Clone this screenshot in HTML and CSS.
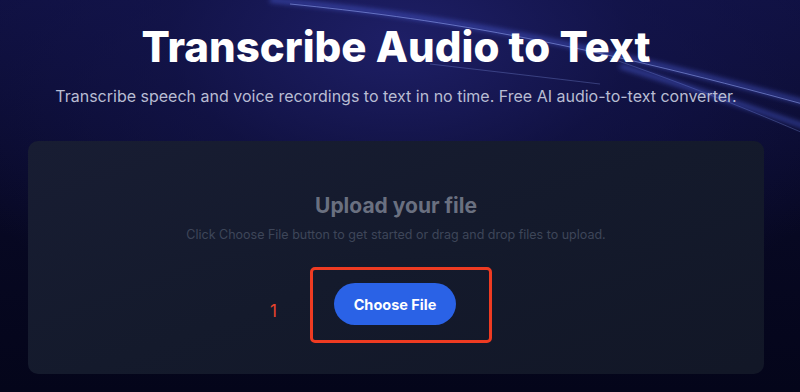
FILE: index.html
```html
<!DOCTYPE html>
<html lang="en">
<head>
    <meta charset="UTF-8" />
    <meta name="viewport" content="width=device-width, initial-scale=1" />
    <title>Transcribe Audio to Text</title>
    <link rel="stylesheet" href="styles.css">
</head>
<body>

    <div class="page">
        <svg class="streaks" viewBox="0 0 800 392" preserveAspectRatio="none" aria-hidden="true">
            <defs>
                <filter id="glow" x="-10%" y="-50%" width="120%" height="200%">
                    <feGaussianBlur stdDeviation="2.5" />
                </filter>
            </defs>
            <path d="M270 0 C 420 14, 560 36, 810 104" class="streak wide" filter="url(#glow)" />
            <path d="M290 4 C 430 18, 570 40, 810 106" class="streak thin" />
            <path d="M430 64 C 490 71, 550 78, 600 84" class="streak faint" />
            <path d="M610 58 C 690 86, 750 110, 810 136" class="streak faint" />
            <path d="M620 66 C 700 90, 750 108, 810 128" class="streak wide" filter="url(#glow)" />
        </svg>

        <div class="hero">
            <h1>Transcribe Audio to Text</h1>
            <p class="lead">Transcribe speech and voice recordings to text in no time. Free AI audio-to-text converter.</p>
        </div>

        <div class="upload-card">
            <h2>Upload your file</h2>
            <p class="hint">Click Choose File button to get started or drag and drop files to upload.</p>
            <div class="step">
                <span class="step-num">1</span>
                <div class="step-box">
                    <button class="choose-btn">Choose File</button>
                </div>
            </div>
        </div>
    </div>

</body>
</html>
```

FILE: styles.css
```css
body {
    margin: 0;
    padding: 0;
    font-family: 'Inter', 'Liberation Sans', sans-serif;
    background-color: #05061a;
}

.page {
    position: relative;
    width: 800px;
    height: 392px;
    overflow: hidden;
    background:
        radial-gradient(ellipse 520px 300px at 400px 40px, #1e1f66 0%, #15165096 45%, rgba(5, 6, 26, 0) 100%),
        linear-gradient(180deg, #0f1040 0%, #070822 60%, #04051a 100%);
}

.streaks {
    position: absolute;
    left: 0;
    top: 0;
    width: 800px;
    height: 392px;
    pointer-events: none;
}

.streak {
    fill: none;
}

.streak.wide {
    stroke: rgba(80, 100, 225, 0.5);
    stroke-width: 5;
}

.streak.thin {
    stroke: rgba(160, 178, 255, 0.5);
    stroke-width: 1;
}

.streak.faint {
    stroke: rgba(140, 158, 240, 0.3);
    stroke-width: 1;
}

.hero {
    position: relative;
    text-align: center;
    padding-top: 22px;
    margin-left: -8px;
}

h1 {
    margin: 0;
    color: #ffffff;
    font-size: 42px;
    line-height: 50px;
    font-weight: 800;
    letter-spacing: 0;
}

.lead {
    margin: 14px 0 0;
    color: #b9bdd3;
    font-size: 16px;
    line-height: 20px;
}

.upload-card {
    position: relative;
    box-sizing: border-box;
    width: 736px;
    height: 233px;
    margin: 35px 0 0 28px;
    border-radius: 10px;
    background: linear-gradient(160deg, #181d33 0%, #141a2c 50%, #11162590 100%);
    background-color: #131829;
    text-align: center;
    padding-top: 52px;
}

h2 {
    margin: 0;
    color: #6a7080;
    font-size: 21px;
    line-height: 26px;
    font-weight: 700;
}

.hint {
    margin: 8px 0 0;
    color: #3e4659;
    font-size: 12.5px;
    line-height: 16px;
}

.step {
    position: relative;
    display: flex;
    justify-content: center;
    margin-top: 24px;
}

.step-box {
    margin-left: 10px;
    padding: 13px 33px 15px 21px;
    border: 3px solid #ee3b22;
    border-radius: 5px;
}

.step-num {
    position: absolute;
    left: 242px;
    top: 34px;
    color: #e8452c;
    font-size: 17px;
    line-height: 20px;
}

.choose-btn {
    display: block;
    width: 122px;
    height: 42px;
    border: none;
    border-radius: 21px;
    background-color: #2a62e6;
    color: #ffffff;
    font-family: 'Inter', 'Liberation Sans', sans-serif;
    font-size: 14.5px;
    font-weight: 700;
    cursor: pointer;
}
```
